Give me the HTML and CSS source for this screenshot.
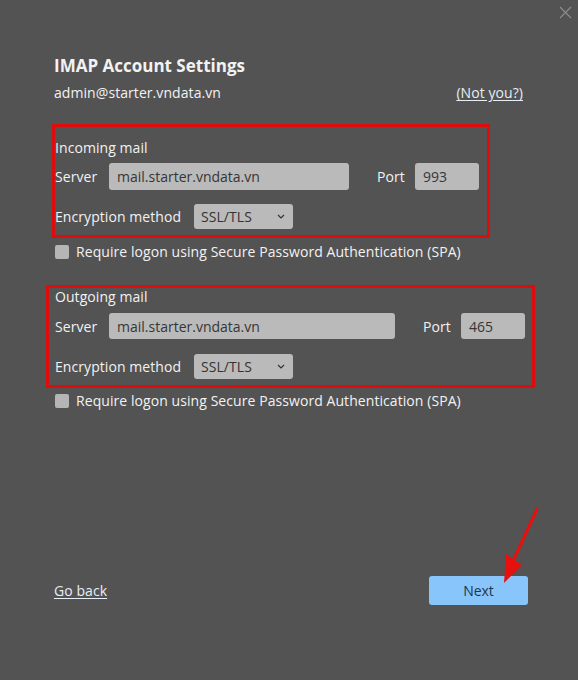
FILE: index.html
```html
<!DOCTYPE html>
<html lang="en">
<head>
    <meta charset="UTF-8">
    <title>IMAP Account Settings</title>
    <link rel="stylesheet" href="styles.css">
</head>
<body>
    <div class="dialog">
        <button class="close" type="button" aria-label="Close">
            <svg width="13" height="13" viewBox="0 0 13 13"><path d="M1 1L12 12M12 1L1 12" stroke="#8c8c8c" stroke-width="1.2" fill="none"/></svg>
        </button>

        <h1 class="title">IMAP Account Settings</h1>
        <div class="account-row">
            <span>admin@starter.vndata.vn</span>
            <a href="#" class="link">(Not you?)</a>
        </div>

        <section class="mail-box incoming">
            <div class="box-title">Incoming mail</div>
            <div class="field-row">
                <label class="field-label">Server</label>
                <input class="text-input server-in" type="text" value="mail.starter.vndata.vn">
                <label class="port-label">Port</label>
                <input class="text-input port" type="text" value="993">
            </div>
            <div class="field-row enc-row">
                <label class="enc-label">Encryption method</label>
                <div class="select">
                    <span>SSL/TLS</span>
                    <svg width="8" height="5" viewBox="0 0 8 5"><path d="M1 1L4 4L7 1" stroke="#333" stroke-width="1.2" fill="none"/></svg>
                </div>
            </div>
        </section>
        <label class="check-row first-check"><span class="check"></span>Require logon using Secure Password Authentication (SPA)</label>

        <section class="mail-box outgoing">
            <div class="box-title">Outgoing mail</div>
            <div class="field-row">
                <label class="field-label">Server</label>
                <input class="text-input server-out" type="text" value="mail.starter.vndata.vn">
                <label class="port-label">Port</label>
                <input class="text-input port" type="text" value="465">
            </div>
            <div class="field-row enc-row">
                <label class="enc-label">Encryption method</label>
                <div class="select">
                    <span>SSL/TLS</span>
                    <svg width="8" height="5" viewBox="0 0 8 5"><path d="M1 1L4 4L7 1" stroke="#333" stroke-width="1.2" fill="none"/></svg>
                </div>
            </div>
        </section>
        <label class="check-row second-check"><span class="check"></span>Require logon using Secure Password Authentication (SPA)</label>

        <div class="footer">
            <a href="#" class="link">Go back</a>
            <button class="next" type="button">Next</button>
        </div>

        <!-- red annotation arrow -->
        <svg class="arrow" width="60" height="90" viewBox="0 0 60 90">
            <path d="M55 2L32 52" stroke="#e8100f" stroke-width="3" stroke-linecap="round"/>
            <path d="M22 76L24 47L40 58Z" fill="#e8100f"/>
        </svg>
    </div>
</body>
</html>
```

FILE: styles.css
```css
html, body {
    margin: 0;
    background: #535353;
}
.dialog {
    position: relative;
    box-sizing: border-box;
    width: 578px;
    height: 680px;
    padding: 54px 55px 75px 54px;
    display: flex;
    flex-direction: column;
    font-family: "Open Sans", "Liberation Sans", sans-serif;
    font-size: 14px;
    letter-spacing: 0.07px;
    color: #f2f2f2;
}
.close {
    position: absolute;
    top: 6px;
    right: 6px;
    padding: 0;
    border: none;
    background: none;
    line-height: 0;
}
.title {
    margin: 0;
    font-size: 17px;
    font-weight: 700;
    line-height: 24px;
    letter-spacing: 0;
}
.account-row {
    margin-top: 5px;
    display: flex;
    justify-content: space-between;
    line-height: 20px;
}
.link {
    color: #e6eef6;
    text-decoration: underline;
    text-underline-offset: 2px;
}
.mail-box {
    box-sizing: border-box;
    border: 3px solid #e00b0b;
}
.incoming {
    width: 438px;
    margin: 21px 0 0 -2px;
    padding: 11px 0 6px 0;
}
.outgoing {
    width: 489px;
    margin: 23px 0 0 -8px;
    padding: 0 0 6px 6px;
}
.box-title {
    line-height: 20px;
}
.outgoing .box-title {
    line-height: 18px;
}
.field-row {
    display: flex;
    align-items: center;
}
.incoming .field-row {
    margin-top: 5px;
}
.outgoing .field-row {
    margin-top: 7px;
}
.incoming .enc-row {
    margin-top: 14px;
}
.outgoing .enc-row {
    margin-top: 15px;
}
.field-label {
    width: 54px;
}
.enc-label {
    width: 139px;
}
.text-input {
    box-sizing: border-box;
    height: 27px;
    padding: 0 8px;
    border: none;
    border-radius: 3px;
    background: #bababa;
    color: #363636;
    font: inherit;
}
.outgoing .text-input {
    height: 26px;
}
.server-in {
    width: 240px;
}
.server-out {
    width: 286px;
}
.port-label {
    margin-left: 28px;
    width: 38px;
}
.port {
    width: 64px;
}
.select {
    box-sizing: border-box;
    width: 99px;
    height: 25px;
    padding: 0 8px 0 7px;
    border-radius: 3px;
    background: #bababa;
    color: #333;
    display: flex;
    align-items: center;
    justify-content: space-between;
}
.check-row {
    display: flex;
    align-items: center;
    gap: 7px;
    line-height: 20px;
    margin-left: 1px;
}
.first-check {
    margin-top: 4px;
}
.second-check {
    margin-top: 3px;
}
.check {
    width: 14px;
    height: 14px;
    border-radius: 2px;
    background: #b5b5b5;
}
.footer {
    margin-top: auto;
    display: flex;
    justify-content: space-between;
    align-items: center;
}
.next {
    width: 99px;
    height: 29px;
    margin-right: -5px;
    border: none;
    border-radius: 3px;
    background: #88c5fa;
    color: #1c3650;
    font: inherit;
}
.arrow {
    position: absolute;
    left: 482px;
    top: 507px;
}
```
